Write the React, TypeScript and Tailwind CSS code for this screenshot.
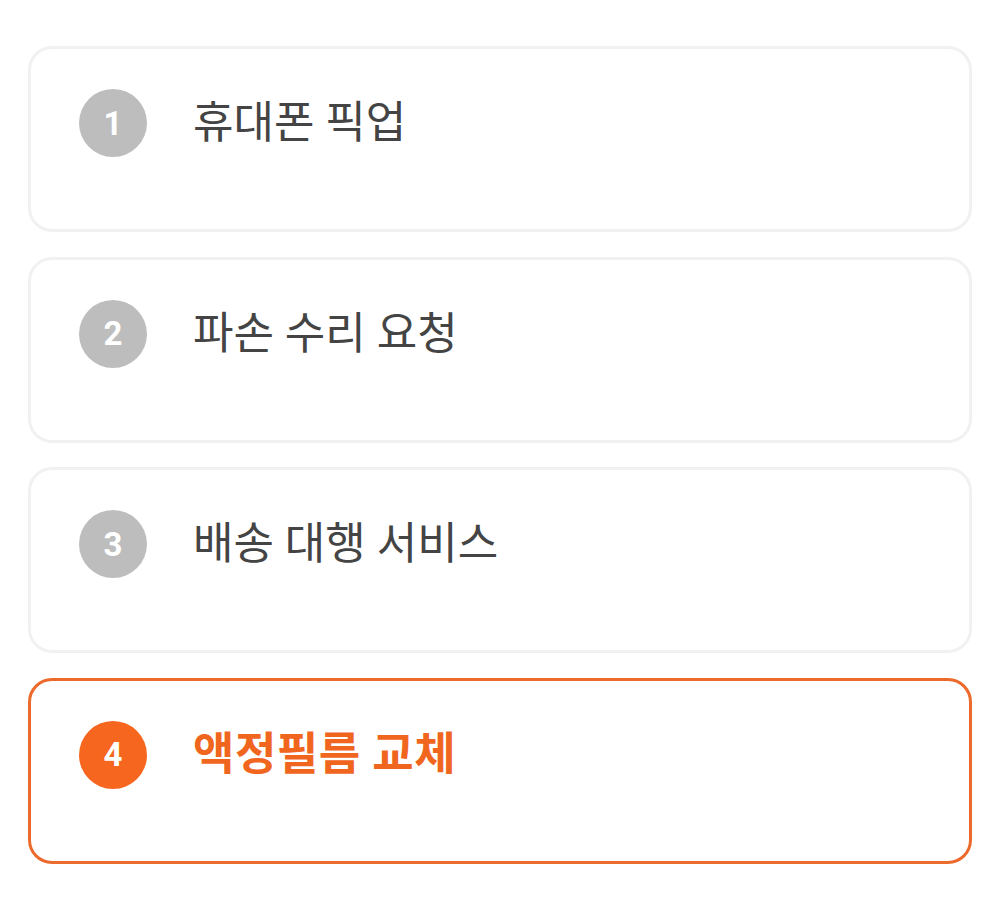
import React from 'react';

interface Step {
  num: number;
  label: string;
}

const steps: Step[] = [
  { num: 1, label: '휴대폰 픽업' },
  { num: 2, label: '파손 수리 요청' },
  { num: 3, label: '배송 대행 서비스' },
  { num: 4, label: '액정필름 교체' },
];

const App: React.FC = () => {
  const active = 4;

  return (
    <div className="min-h-screen bg-white pl-[28px] pr-[26px] pt-[46px]">
      <div className="flex flex-col gap-[24.6px]">
        {steps.map((step) => {
          const isActive = step.num === active;
          return (
            <div
              key={step.num}
              className={
                isActive
                  ? 'h-[186px] rounded-[24px] border-[3px] border-[#ec6a2c] bg-white pl-[48px] pt-[40px]'
                  : 'h-[186px] rounded-[24px] border-[3px] border-[#f1f1f1] bg-white pl-[48px] pt-[40px]'
              }
            >
              <div className="flex items-center">
                {/* Step number */}
                <div
                  className={
                    isActive
                      ? 'flex h-[68px] w-[68px] shrink-0 items-center justify-center rounded-full bg-[#f7661f]'
                      : 'flex h-[68px] w-[68px] shrink-0 items-center justify-center rounded-full bg-[#bdbdbd]'
                  }
                >
                  <span className="text-[33px] font-bold leading-none text-white [font-family:Roboto,'Liberation_Sans',sans-serif]">
                    {step.num}
                  </span>
                </div>
                <span
                  className={
                    isActive
                      ? "ml-[46px] text-[45px] font-bold leading-none tracking-[0.5px] text-[#f0661f] [font-family:Roboto,'Noto_Sans_CJK_KR',sans-serif]"
                      : "ml-[46px] text-[44px] leading-none text-[#444444] [font-family:Roboto,'Noto_Sans_CJK_KR',sans-serif]"
                  }
                >
                  {step.label}
                </span>
              </div>
            </div>
          );
        })}
      </div>
    </div>
  );
};

export default App;
